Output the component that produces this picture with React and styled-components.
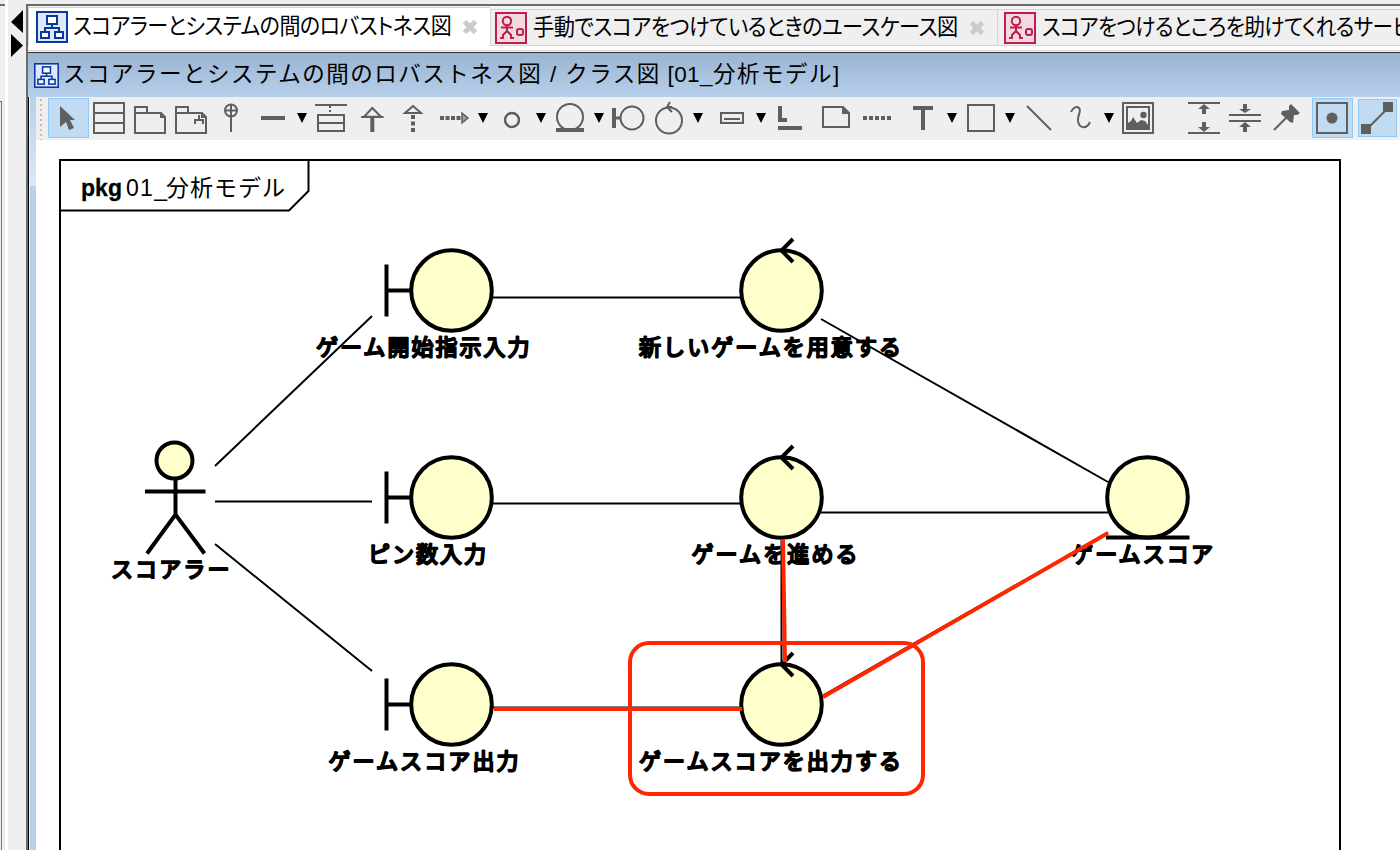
import React from "react";
import styled, { createGlobalStyle } from "styled-components";

const INK = "#5f5f5f";
const RED = "#ff2600";
const CREAM = "#ffffcc";

const GlobalStyle = createGlobalStyle`
  * { box-sizing: border-box; }
  body { margin: 0; overflow: hidden; background: #efefef; }
`;

const Shell = styled.div`
  display: flex;
  width: 1400px;
  height: 850px;
  overflow: hidden;
  background: #efefef;
  color: #000;
  font-family: "Liberation Sans", "Noto Sans CJK JP", sans-serif;
`;

const SidePanel = styled.div`
  width: 8px;
  flex: none;
  display: flex;
  flex-direction: column;
  border-right: 3px solid #fff;
  padding-top: 4px;
`;

const SideHead = styled.div`
  height: 97px;
  border-top: 2px solid #6d6d6d;
`;

const SideBody = styled.div`
  flex: 1;
  width: 2px;
  border-top: 1px solid #6a7078;
  border-right: 1px solid #777d86;
  background: #e9e9e9;
`;

const Divider = styled.div`
  width: 18px;
  flex: none;
  padding: 10px 0 0 3px;
`;

const Editor = styled.div`
  flex: 1;
  min-width: 0;
  margin-top: 4px;
  border-top: 2px solid #6b6a6b;
  border-left: 2px solid #6b6d6a;
  display: flex;
  flex-direction: column;
`;

const TabBar = styled.div`
  height: 47px;
  flex: none;
  display: flex;
  align-items: flex-start;
  background: linear-gradient(#f4f4f4 0 3px, #fff 3px 44px, #d6d6d6 44px 45px, #f4f4f4 45px 46px, #303030 46px 47px);
`;

const Tab = styled.div`
  flex: none;
  display: flex;
  align-items: center;
  width: ${(p) => p.$width}px;
  height: ${(p) => (p.$active ? 39 : 37)}px;
  margin-top: ${(p) => (p.$active ? 1 : 3)}px;
  padding: 0 0 0 ${(p) => p.$inset}px;
  border: solid #d4d4d4;
  border-width: ${(p) => (p.$active ? "1px 0 0 1px" : "1px 0 1px 1px")};
  background: ${(p) => (p.$active ? "#fff" : "#efefef")};
`;

const TabLabel = styled.div`
  flex: none;
  width: ${(p) => p.$width}px;
  margin-left: ${(p) => p.$gap}px;
  font-size: 22.5px;
  line-height: 30px;
  letter-spacing: -0.6px;
  white-space: nowrap;
  font-feature-settings: "palt";
  > span {
    display: inline-block;
    transform: scaleX(${(p) => p.$squeeze});
    transform-origin: left;
  }
`;

const TitleBar = styled.div`
  height: 44px;
  flex: none;
  display: flex;
  align-items: center;
  gap: 4px;
  padding-left: 6px;
  background: linear-gradient(#99b3d1, #b8d0eb);
`;

const TitleText = styled.span`
  font-size: 22.5px;
  line-height: 32px;
  letter-spacing: 1.5px;
  white-space: pre;
`;

const Latin = styled.span`
  letter-spacing: ${(p) => p.$tracking}px;
`;

const Workspace = styled.div`
  flex: 1;
  min-height: 0;
  display: flex;
  border-left: 1px solid #000;
`;

const FrameEdge = styled.div`
  width: 7px;
  flex: none;
  border-left: 1px solid #e7edf5;
  background: linear-gradient(#b8d0eb 0, #dce8f6 89px, #b8d0eb 89px);
`;

const Content = styled.div`
  flex: 1;
  min-width: 0;
  display: flex;
  flex-direction: column;
`;

const Toolbar = styled.div`
  height: 43px;
  flex: none;
  display: flex;
  align-items: center;
  background: #efefef;
`;

const Grip = styled.div`
  width: 12px;
  height: 42px;
  flex: none;
  display: flex;
  padding: 1px 0 0 4px;
  &::after {
    content: "";
    width: 2px;
    background: repeating-linear-gradient(#bdbdbd 0 2px, transparent 2px 5px);
  }
`;

const Tool = styled.div`
  flex: none;
  width: ${(p) => p.$width || 41}px;
  height: ${(p) => p.$height || 40}px;
  margin: -2px 0 0 ${(p) => p.$space || 0}px;
  display: flex;
  align-items: center;
  justify-content: center;
  background: ${(p) => (p.$on ? "#c0dbf2" : "transparent")};
  box-shadow: ${(p) => (p.$on ? "inset 0 0 0 1px #90c8f6" : "none")};
`;

const ToolGlyph = styled.svg`
  flex: none;
  display: block;
  margin-top: 1px;
  fill: none;
  stroke: ${INK};
  stroke-width: 2;
  .solid { fill: ${INK}; stroke: none; }
`;

const DropArrow = styled.div`
  flex: none;
  width: 17px;
  display: flex;
  padding: 0 0 1px 3px;
`;

const Canvas = styled.svg`
  flex: none;
  display: block;
  background: #fff;
`;

const Label = styled.text`
  font: 400 22px "Noto Sans CJK JP", sans-serif;
  fill: #000;
  stroke: #000;
  stroke-width: 2px;
  stroke-linejoin: round;
`;

const FrameText = styled.text`
  font: ${(p) => (p.$bold ? 700 : 400)} 23px "Liberation Sans", "Noto Sans CJK JP", sans-serif;
  stroke: #000;
  stroke-width: ${(p) => (p.$bold ? 0.3 : 0)}px;
`;

function ClassIcon({ size }) {
  return (
    <svg width={size} height={size} viewBox="0 0 32 32" fill="none" stroke="#0838a0" strokeWidth="2" style={{ flex: "none" }}>
      <rect x="1" y="1" width="30" height="30" fill="#dfe8f8" />
      <rect x="11" y="5" width="10" height="8" fill="#fff" />
      <rect x="5" y="21" width="8" height="6" fill="#fff" />
      <rect x="19" y="21" width="8" height="6" fill="#fff" />
      <path d="M16 13V17M9 21V17H23V21" />
    </svg>
  );
}

function UseCaseIcon() {
  return (
    <svg width="32" height="32" viewBox="0 0 32 32" fill="none" stroke="#bd1d4d" strokeWidth="2" style={{ flex: "none" }}>
      <rect x="1" y="1" width="30" height="30" fill="#f5d9e1" />
      <circle cx="12" cy="9" r="4.2" />
      <path d="M12 13V20M6 15.5H18M12 19L8 23V26H5M12 19L16 23V26H19" />
      <rect x="22" y="17" width="6" height="6" rx="2" />
    </svg>
  );
}

const CloseIcon = () => (
  <svg width="16" height="16" viewBox="0 0 16 16" style={{ flex: "none" }}>
    <path d="M2.5 2.5L13.5 13.5M13.5 2.5L2.5 13.5" stroke="#c9cccb" strokeWidth="5" />
  </svg>
);

const Drop = () => (
  <DropArrow>
    <svg width="10" height="10" viewBox="0 0 10 10">
      <path d="M0 0H10L5 10Z" />
    </svg>
  </DropArrow>
);

const folder = <path d="M5 36V10H17V16H31L35 20V36ZM5 16H17M31 16V20H35" />;

const glyphs = {
  cursor: <path className="solid" d="M12 9L27 23H22L26 31L21 33L18 25L12 30Z" />,
  classBox: <path d="M5 6H35V36H5ZM5 16H35M5 26H35" />,
  folder,
  model: (
    <>
      {folder}
      <path d="M24 27V23H32V27M28 23V18" />
    </>
  ),
  pin: (
    <>
      <circle cx="19" cy="13.5" r="6" />
      <path d="M19 8V35M13 13.5H25" />
    </>
  ),
  line: <rect className="solid" x="8" y="19" width="24" height="4" />,
  assocClass: (
    <>
      <path d="M4 8H36M7 18H33V34H7ZM7 26H33" />
      <path d="M19 9V17" strokeDasharray="2 2" />
    </>
  ),
  generalize: (
    <>
      <path d="M20.3 11L12 19.8H29Z" />
      <path d="M20.3 20V35" strokeWidth="4" />
      <path d="M9 20H31.5" />
    </>
  ),
  realize: (
    <>
      <path d="M20 9L12 16H28Z" />
      <path d="M20 18V36" strokeWidth="4" strokeDasharray="4 2.5" />
    </>
  ),
  depend: (
    <>
      <path d="M6 21H28" strokeWidth="4" strokeDasharray="4 1.5" />
      <path d="M28 16L34 21L28 26Z" fill="#9a9a9a" strokeWidth="1.5" />
    </>
  ),
  ball: <circle cx="20" cy="23" r="7" strokeWidth="2.5" />,
  entity: (
    <>
      <circle cx="20" cy="20" r="13" />
      <path d="M6 33H34" strokeWidth="4" />
    </>
  ),
  boundary: (
    <>
      <path d="M6 11V31" strokeWidth="4" />
      <path d="M8 21H12" strokeWidth="3" />
      <circle cx="24" cy="21" r="11.5" />
    </>
  ),
  control: (
    <>
      <circle cx="20" cy="23.5" r="13" />
      <path d="M21 5L18 10L23 15M18 10H23" />
    </>
  ),
  instance: <path d="M9 16H31V26H9ZM12 22H28" />,
  link: (
    <>
      <path d="M10 9V23H17" strokeWidth="4" />
      <path d="M8 31H32" strokeWidth="4" />
    </>
  ),
  note: (
    <>
      <path d="M7 10H27L33 16V30H7Z" />
      <path className="solid" d="M26 9V17H34Z" />
    </>
  ),
  anchor: <path d="M6 21H34" strokeWidth="4" strokeDasharray="4 2" />,
  text: <path d="M10 11H30M20 11V33" strokeWidth="4" />,
  rect: <rect x="7" y="8" width="26" height="26" />,
  slash: <path d="M8 9L32 33" />,
  scribble: <path d="M11 15C13 10 17 9 19 11C22 14 17 19 18 24C19 32 27 32 30 25" />,
  image: (
    <>
      <path d="M5 6H35V36H5ZM9 10H31V32H9Z" />
      <path className="solid" d="M10 31V26L13 24L15 20L19 26L23 23L27 24L30 28V31Z" />
      <circle className="solid" cx="25.5" cy="18" r="3.2" />
    </>
  ),
  expand: (
    <>
      <path d="M4 6H36M4 36H36" />
      <path className="solid" d="M20 7L26 12H22V17H18V12H14ZM20 35L26 30H22V25H18V30H14Z" />
    </>
  ),
  shrink: (
    <>
      <path d="M4 18H36M4 24H36" />
      <path className="solid" d="M20 16L26 12H22V7H18V12H14ZM20 25L26 30H22V35H18V30H14Z" />
    </>
  ),
  pushpin: (
    <>
      <path d="M8 33L20 21" />
      <path className="solid" d="M25 7L34 16L31 18L28 18L27 26L24 25L15 17L16 14L23 13L23 9Z" />
    </>
  ),
  center: (
    <>
      <rect x="5" y="6" width="30" height="30" />
      <circle className="solid" cx="20" cy="21" r="5.5" />
    </>
  ),
  straight: (
    <>
      <path d="M9 33L31 11" />
      <path className="solid" d="M4 27H14V37H4ZM26 5H36V15H26Z" />
    </>
  ),
};

const tools = [
  { name: "cursor", on: true },
  { name: "classBox" },
  { name: "folder" },
  { name: "model" },
  { name: "pin" },
  { name: "line", drop: true },
  { name: "assocClass" },
  { name: "generalize" },
  { name: "realize" },
  { name: "depend", drop: true },
  { name: "ball", drop: true },
  { name: "entity", drop: true },
  { name: "boundary" },
  { name: "control", drop: true },
  { name: "instance", drop: true, space: 5 },
  { name: "link" },
  { name: "note", space: 5 },
  { name: "anchor" },
  { name: "text", drop: true, space: 5 },
  { name: "rect", drop: true },
  { name: "slash" },
  { name: "scribble", drop: true },
  { name: "image" },
  { name: "expand", space: 25 },
  { name: "shrink" },
  { name: "pushpin" },
  { name: "center", on: true, space: 5 },
  { name: "straight", on: true, space: 5, width: 39, height: 38 },
];

const Disc = ({ x, y }) => <circle cx={x} cy={y} r="40.3" fill={CREAM} stroke="#000" strokeWidth="4" />;

const Boundary = ({ y }) => (
  <g stroke="#000" strokeWidth="4">
    <path d={`M386.5 ${y - 26}V${y + 26}M386.5 ${y}H411`} />
    <Disc x={451.5} y={y} />
  </g>
);

const Control = ({ y }) => (
  <g stroke="#000" strokeWidth="4" fill="none">
    <Disc x={781.5} y={y} />
    <path d={`M793 ${y - 51.5}L781.5 ${y - 40}L793 ${y - 28.5}`} />
  </g>
);

const rows = [290.5, 497.5, 704.5];

const labels = [
  ["スコアラー", 111, 577, 118.5],
  ["ゲーム開始指示入力", 316, 355, 213.5],
  ["ピン数入力", 368, 562, 118],
  ["ゲームスコア出力", 328.5, 769, 190],
  ["新しいゲームを用意する", 639, 355, 262],
  ["ゲームを進める", 691.5, 562, 166],
  ["ゲームスコアを出力する", 639, 769, 262],
  ["ゲームスコア", 1071, 562, 142],
];

function Diagram() {
  return (
    <Canvas width="1364" height="710" viewBox="36 140 1364 710">
      <g fill="none" stroke="#000" strokeWidth="2">
        <path d="M60 860V160H1340V860" />
        <path d="M61 210.5H289L308.5 191V161" />
      </g>
      <FrameText x="81" y="196" $bold textLength="41">pkg</FrameText>
      <FrameText x="126" y="196" textLength="41">01_</FrameText>
      <FrameText x="166" y="196" textLength="119">分析モデル</FrameText>

      <g stroke="#000" strokeWidth="2">
        <path d="M215 466L372 316M215 501.5H372M215 544L372 671" />
        <path d="M492 297.5H741M492 503.5H741M492 707.5H741" />
        <path d="M821 319L1108 482M821 512.5H1108M781.5 538V664M822 696L1108 532.5" />
      </g>

      <g fill="none" stroke="#000" strokeWidth="4">
        <path d="M175.5 479V515M145 491.5H205.5M147 553.5L175.5 514.5L204.5 553.5" />
        <circle cx="174.5" cy="460.5" r="18" fill={CREAM} />
      </g>
      {rows.map((y) => (
        <React.Fragment key={y}>
          <Boundary y={y} />
          <Control y={y} />
        </React.Fragment>
      ))}
      <Disc x={1147.5} y={497.5} />
      <path d="M1106 537.5H1189.5" stroke="#000" strokeWidth="4" />

      {labels.map(([text, x, y, w]) => (
        <Label key={text} x={x} y={y} textLength={w}>{text}</Label>
      ))}

      <g fill="none" stroke={RED} strokeWidth="4">
        <path d="M494 709H742M783 539L785 662M823 697L1108 533" />
        <rect x="630" y="643" width="293" height="151" rx="19" />
      </g>
    </Canvas>
  );
}

export default function App() {
  return (
    <>
      <GlobalStyle />
      <Shell>
        <SidePanel>
          <SideHead />
          <SideBody />
        </SidePanel>
        <Divider>
          <svg width="12" height="48" viewBox="0 0 12 48">
            <path d="M12 0V23L0 12ZM0 24L12 35.5L0 47Z" />
          </svg>
        </Divider>
        <Editor>
          <TabBar>
            <Tab $active $width={462} $inset={7}>
              <ClassIcon size={32} />
              <TabLabel $gap={5} $width={389} $squeeze={0.934}>
                <span>スコアラーとシステムの間のロバストネス図</span>
              </TabLabel>
              <CloseIcon />
            </Tab>
            <Tab $width={507} $inset={4}>
              <UseCaseIcon />
              <TabLabel $gap={6} $width={436} $squeeze={0.943}>
                <span>手動でスコアをつけているときのユースケース図</span>
              </TabLabel>
              <CloseIcon />
            </Tab>
            <Tab $width={420} $inset={6}>
              <UseCaseIcon />
              <TabLabel $gap={6} $width={370} $squeeze={0.92}>
                <span>スコアをつけるところを助けてくれるサービ</span>
              </TabLabel>
            </Tab>
          </TabBar>
          <TitleBar>
            <ClassIcon size={25} />
            <TitleText>
              スコアラーとシステムの間のロバストネス図<Latin $tracking={1.4}> / </Latin>クラス図<Latin $tracking={0.4}> [01_</Latin>分析モデル<Latin $tracking={0}>]</Latin>
            </TitleText>
          </TitleBar>
          <Workspace>
            <FrameEdge />
            <Content>
              <Toolbar>
                <Grip />
                {tools.map((t) => (
                  <React.Fragment key={t.name}>
                    <Tool $on={t.on} $space={t.space} $width={t.width} $height={t.height}>
                      <ToolGlyph width="41" height="43" viewBox="0 0 41 43">{glyphs[t.name]}</ToolGlyph>
                    </Tool>
                    {t.drop && <Drop />}
                  </React.Fragment>
                ))}
              </Toolbar>
              <Diagram />
            </Content>
          </Workspace>
        </Editor>
      </Shell>
    </>
  );
}
